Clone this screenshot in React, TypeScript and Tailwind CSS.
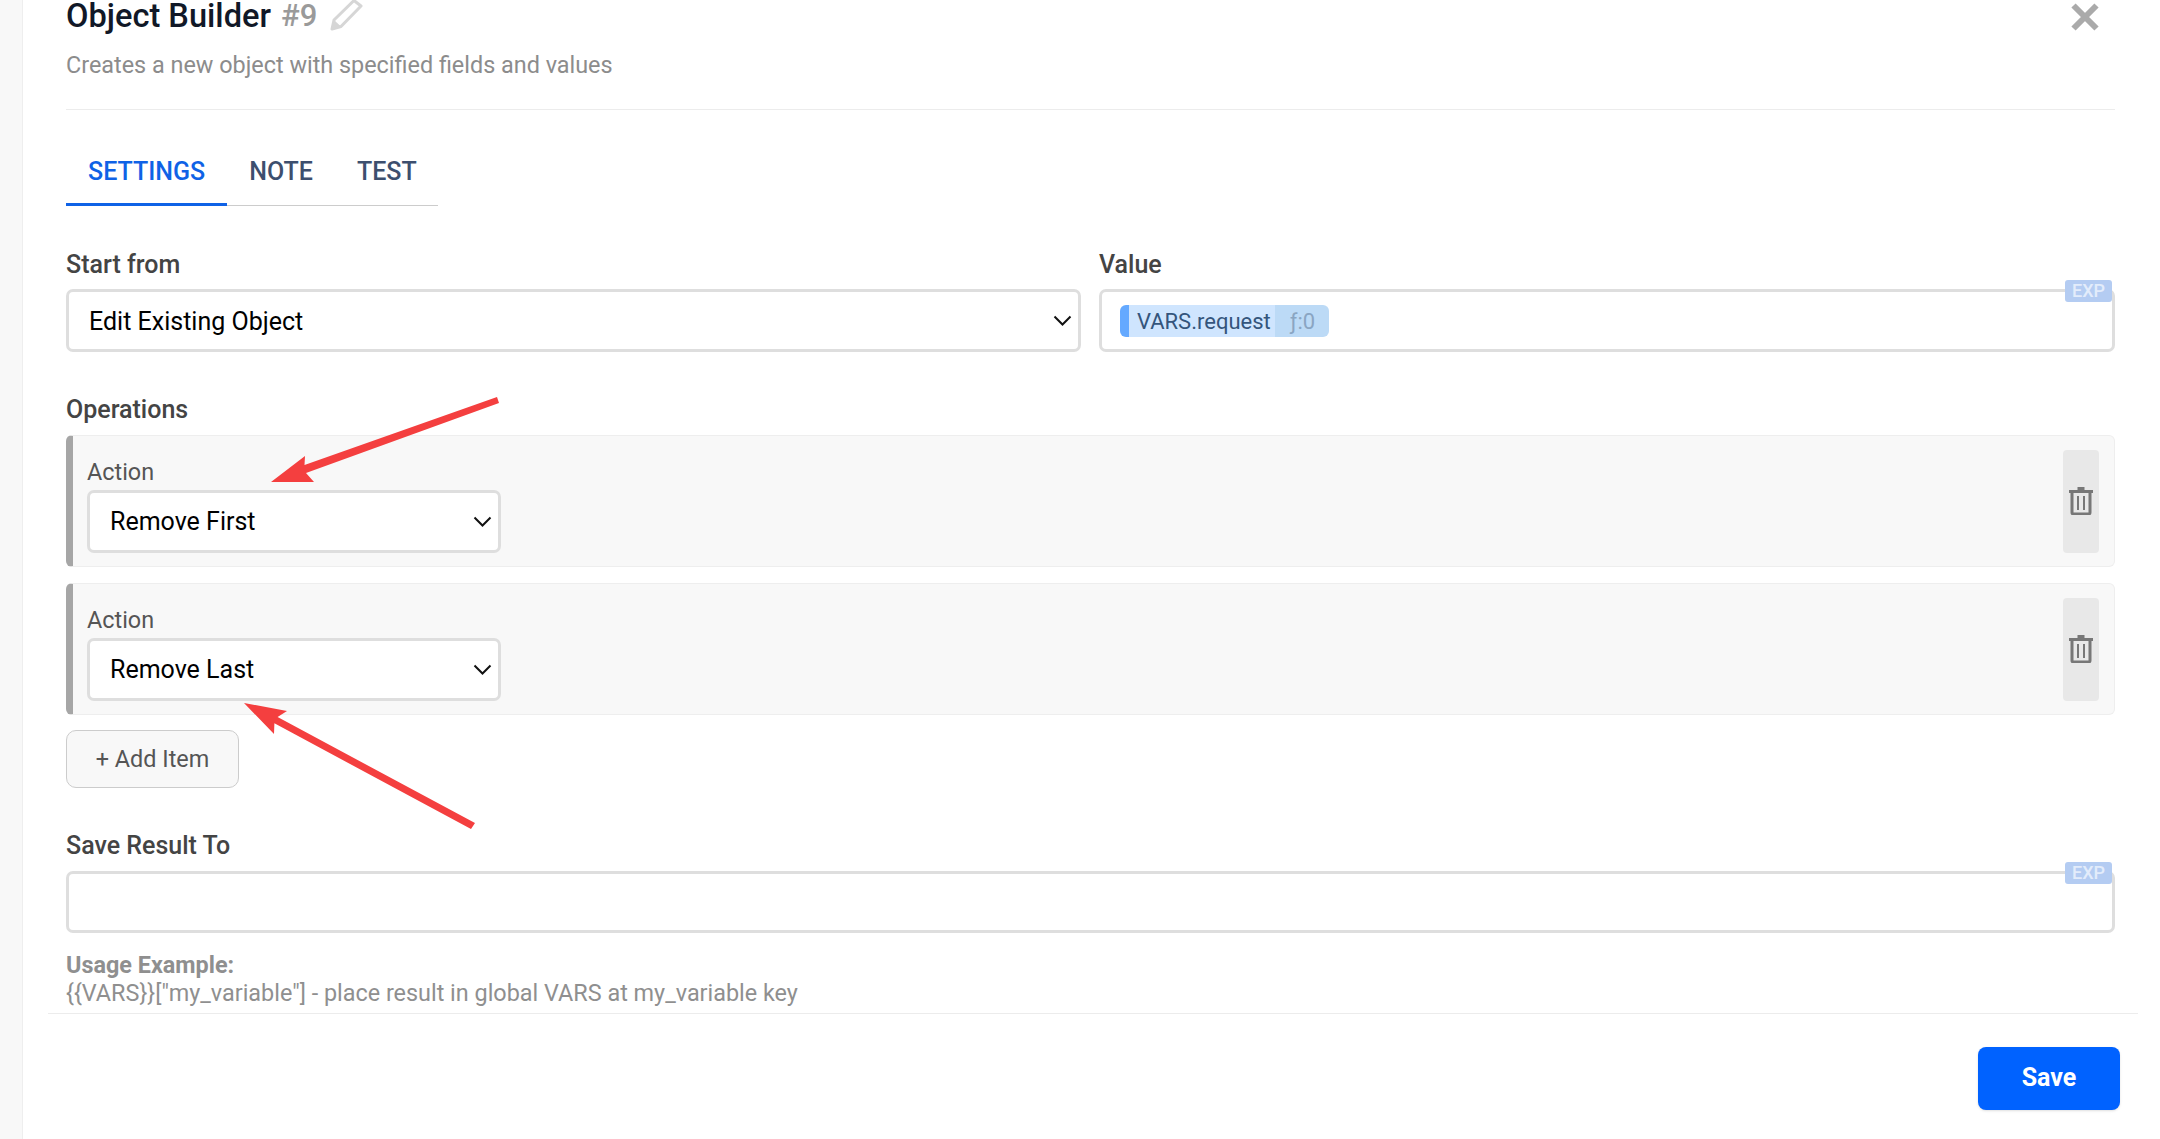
import type { ReactNode } from 'react';

function Chevron() {
  return (
    <svg width="19" height="11" viewBox="0 0 19 11" fill="none" className="shrink-0">
      <path d="M1.5 1.5 9.5 9.5 17.5 1.5" stroke="#111" strokeWidth="2" />
    </svg>
  );
}

function TrashIcon() {
  return (
    <svg width="24" height="28" viewBox="0 0 24 28" fill="none" className="mb-[2px]">
      <path d="M8.5 1.5h7M0 4.5h24" stroke="#777" strokeWidth="3" />
      <path d="M3 6v19.5A1.5 1.5 0 0 0 4.5 27h15a1.5 1.5 0 0 0 1.5-1.5V6" stroke="#777" strokeWidth="3" />
      <path d="M9 9v14M15 9v14" stroke="#777" strokeWidth="2" />
    </svg>
  );
}

function PencilIcon() {
  return (
    <svg width="34" height="32" viewBox="0 0 34 32" fill="none" className="ml-[13px] mb-[2px]">
      <path d="M2 30 4 21 24 1.5 31 7 11 27.5Z" stroke="#d6d6d6" strokeWidth="3" strokeLinejoin="round" />
      <path d="M2 30 4 21 11 27.5Z" fill="#d6d6d6" />
    </svg>
  );
}

function CloseIcon() {
  return (
    <svg width="28" height="28" viewBox="0 0 28 28" className="mt-[2px]">
      <path d="M2.5 2.5 25.5 25.5M25.5 2.5 2.5 25.5" stroke="#aaa" strokeWidth="6" />
    </svg>
  );
}

function Label({ children }: { children: ReactNode }) {
  return <div className="h-[28px] text-[25px] leading-[30px] font-medium text-[#444]">{children}</div>;
}

function SelectBox({ value, className, textClass = '' }: { value: string; className: string; textClass?: string }) {
  return (
    <div className={`flex h-[63px] items-center justify-between rounded-[7px] border-[3px] border-[#dedede] bg-white pl-[20px] pr-[6px] text-[25px] text-black ${className}`}>
      <span className={textClass}>{value}</span>
      <Chevron />
    </div>
  );
}

function ExpBadge() {
  return (
    <span className="absolute right-0 top-[-12px] flex h-[22px] w-[47px] items-center justify-center rounded-[3px] bg-[#b4ccf2] pb-[2px] text-[18px] font-medium text-[#e3ecfb]">
      EXP
    </span>
  );
}

function OperationItem({ action }: { action: string }) {
  return (
    <div className="flex h-[132px] justify-between rounded-[6px] border border-l-[7px] border-[#eeeeee] border-l-[#a6a6a6] bg-[#f8f8f8] pl-[14px] pr-[15px]">
      <div className="pt-[22px]">
        <div className="mb-[4px] h-[28px] text-[23.4px] leading-[28px] text-[#555]">Action</div>
        <SelectBox value={action} className="w-[414px]" />
      </div>
      <div className="mt-[14px] flex h-[103px] w-[36px] items-center justify-center rounded-[4px] bg-[#e8e8e8]">
        <TrashIcon />
      </div>
    </div>
  );
}

export default function App() {
  return (
    <div className="relative flex h-[1139px] overflow-hidden bg-white font-['Roboto',sans-serif]">
      <div className="w-[23px] shrink-0 border-r border-[#eeeeee] bg-[#f8f8f8]" />

      <div className="flex min-w-0 flex-1 flex-col">
        <div className="pl-[43px] pr-[45px]">
          {/* Header */}
          <div className="border-b border-[#ececec] pb-[28px]">
            <div className="flex h-[32px] items-center justify-between">
              <div className="flex items-center">
                <h1 className="text-[32.6px] font-medium leading-[32px] text-[#111827]">Object Builder</h1>
                <span className="ml-[10px] text-[31px] font-medium leading-[32px] text-[#9a9a9a]">#9</span>
                <PencilIcon />
              </div>
              <div className="mr-[16px]"><CloseIcon /></div>
            </div>
            <p className="mt-[17px] h-[32px] text-[23.4px] leading-[32px] text-[#8c8c8c]">Creates a new object with specified fields and values</p>
          </div>

          {/* Tabs */}
          <div className="mt-[40px] flex w-[372px] border-b border-[#cccccc] text-[25px] font-medium">
            <div className="-mb-px flex h-[56px] items-center border-b-[3px] border-[#0f62e6] px-[22px] pb-[9px] text-[#0f62e6]">SETTINGS</div>
            <div className="flex h-[55px] items-center px-[22px] pb-[11px] text-[#3d4f6e]">NOTE</div>
            <div className="flex h-[55px] items-center px-[22px] pb-[11px] text-[#3d4f6e]">TEST</div>
          </div>

          {/* Start from / Value */}
          <div className="mt-[44px] flex gap-[18px]">
            <div className="w-[1015px] shrink-0">
              <div className="mb-[11px]"><Label>Start from</Label></div>
              <SelectBox value="Edit Existing Object" className="w-full" textClass="pt-[2px]" />
            </div>
            <div className="flex-1">
              <div className="mb-[11px]"><Label>Value</Label></div>
              <div className="relative flex h-[63px] items-center rounded-[7px] border-[3px] border-[#dedede] bg-white pl-[18px]">
                <div className="flex h-[32px] overflow-hidden rounded-[6px] border-l-[9px] border-[#64a9ff] text-[22px] leading-[34px]">
                  <span className="w-[146px] bg-[#cfe5fe] pl-[8px] text-[#34557c]">VARS.request</span>
                  <span className="w-[54px] bg-[#bcdaf6] pl-[15px] text-[#8aa5c2]">ƒ:0</span>
                </div>
                <ExpBadge />
              </div>
            </div>
          </div>

          {/* Operations */}
          <div className="mt-[43px] mb-[12px]"><Label>Operations</Label></div>
          <div className="flex flex-col gap-[16px]">
            <OperationItem action="Remove First" />
            <OperationItem action="Remove Last" />
          </div>
          <button className="mt-[15px] flex h-[58px] w-[173px] items-center justify-center rounded-[10px] border border-[#cccccc] bg-[#f8f8f8] pt-[2px] text-[23.4px] text-[#555]">
            + Add Item
          </button>

          {/* Save result */}
          <div className="mt-[43px] mb-[12px]"><Label>Save Result To</Label></div>
          <div className="relative h-[62px] rounded-[7px] border-[3px] border-[#dedede] bg-white">
            <ExpBadge />
          </div>
          <div className="mt-[18px] text-[23.4px] leading-[28px] text-[#8f8f8f]">
            <div className="font-bold">Usage Example:</div>
            <div>{'{{VARS}}["my_variable"] - place result in global VARS at my_variable key'}</div>
          </div>
        </div>

        {/* Footer */}
        <div className="ml-[25px] mr-[22px] mt-[6px] flex justify-end border-t border-[#ececec] pt-[33px] pr-[18px]">
          <button className="h-[63px] w-[142px] rounded-[8px] bg-[#0062ff] pb-[2px] text-[25px] font-bold text-white shadow-sm">Save</button>
        </div>
      </div>

      {/* Annotation arrows drawn over the screenshot */}
      <svg className="pointer-events-none absolute left-0 top-0" width="2160" height="1139" viewBox="0 0 2160 1139">
        <path d="M271 482 305 456 304.5 465 497 397 499 403 306 473 314 482Z" fill="#f43f3f" />
        <path d="M244 703 287 711 277.6 717.1 475 823 471 829 274.4 723.3 274 734Z" fill="#f43f3f" />
      </svg>
    </div>
  );
}
